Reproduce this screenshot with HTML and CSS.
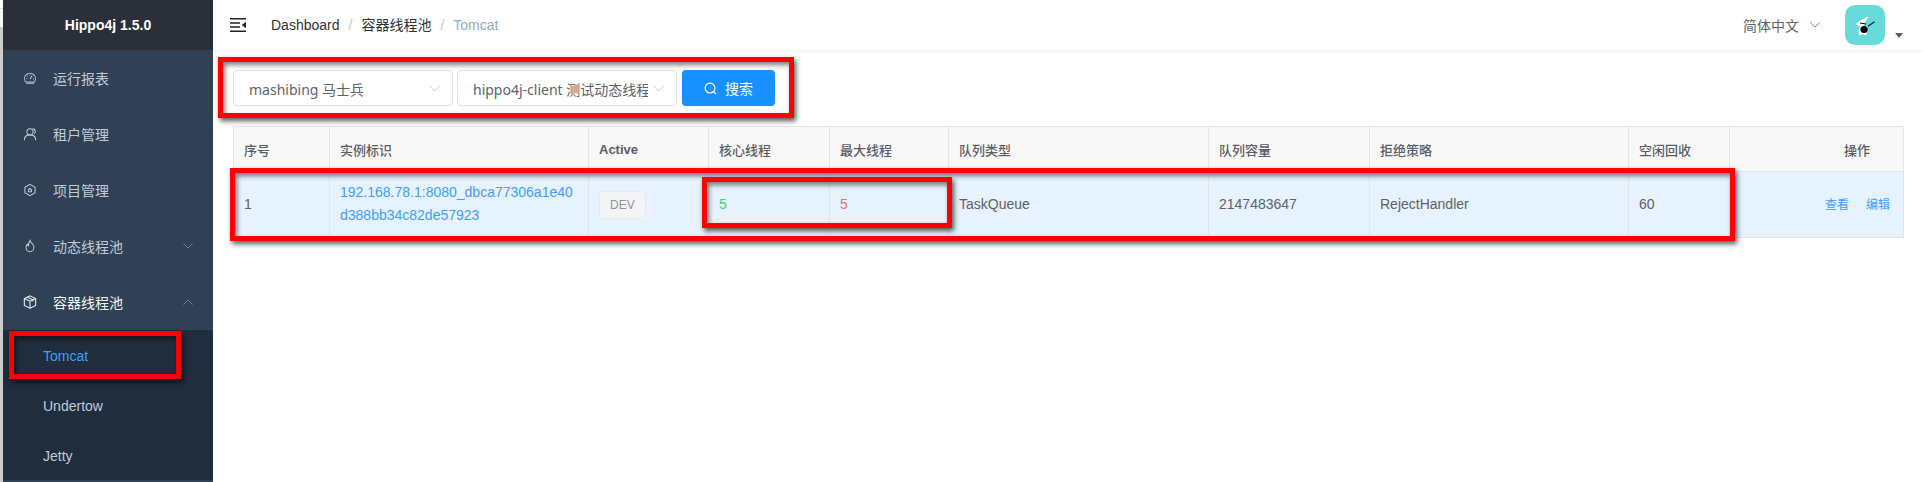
FILE: index.html
```html
<!DOCTYPE html>
<html lang="zh-CN">
<head>
<meta charset="utf-8">
<title>Hippo4j</title>
<link rel="stylesheet" href="styles.css">
</head>
<body>
<div class="app">
  <div class="strip"><div class="strip-top"></div><div class="strip-mid"></div><div class="strip-rest"></div></div>
  <aside class="sidebar">
    <div class="logo">Hippo4j 1.5.0</div>
    <nav class="menu">
      <a class="item">
        <svg class="ico" viewBox="0 0 16 16"><path d="M3 12.600A6.300 6.300 0 1 1 13 12.600Z"/><path d="M8 9.500 10.500 5.500M4 8.500h1M11.500 9h1M8 4v1M5 5.500l.7.7"/><path d="M3.500 14h9"/></svg>
        <span>运行报表</span>
      </a>
      <a class="item">
        <svg class="ico" viewBox="0 0 16 16"><circle cx="8" cy="5.500" r="3.600"/><path d="M1.500 15c0-3.600 2.600-6 6.500-6s6.500 2.400 6.500 6"/><path d="M11 1.800c2 .3 3 1.500 3 3.200 0 1-.5 2-1.300 2.500"/></svg>
        <span>租户管理</span>
      </a>
      <a class="item">
        <svg class="ico" viewBox="0 0 16 16"><path d="M8 1.500 13.800 4.800v6.400L8 14.500 2.200 11.200V4.800Z"/><path d="M6.300 10V7.800L8 6.300l1.700 1.500V10Z"/></svg>
        <span>项目管理</span>
      </a>
      <a class="item">
        <svg class="ico" viewBox="0 0 16 16"><path d="M8.200 1.500c.3 2.200 1.600 3 2.800 4.300 1 1.100 1.500 2.200 1.500 3.500 0 3-2.100 5.200-4.600 5.200S3.500 12.300 3.500 9.500c0-1.500.6-2.700 1.500-3.700.2 1 .6 1.600 1.300 2C6.200 5.500 6.800 3.200 8.200 1.500Z"/></svg>
        <span>动态线程池</span>
        <svg class="chev" viewBox="0 0 10 6"><path d="M.5.500 5 5 9.500.5"/></svg>
      </a>
      <a class="item item-open">
        <svg class="ico" viewBox="0 0 16 16"><path d="M8 1 14.500 4v8L8 15 1.500 12V4Z"/><path d="M1.500 4 8 7l6.500-3M8 7v8M5 2.500 11.500 5.500v2"/></svg>
        <span>容器线程池</span>
        <svg class="chev" viewBox="0 0 10 6"><path d="M.5 5.500 5 1l4.500 4.500"/></svg>
      </a>
      <div class="sub">
        <a class="sub-item sub-active">Tomcat</a>
        <a class="sub-item">Undertow</a>
        <a class="sub-item">Jetty</a>
      </div>
    </nav>
  </aside>
  <main class="main">
    <header class="navbar">
      <svg class="hamburger" viewBox="0 0 16 14"><path d="M0 0h16v1.600H0zM0 12.400h16V14H0zM0 4.200h10v1.500H0zM0 8.300h10v1.500H0zM16 3.800v6.400L11.800 7Z"/></svg>
      <div class="crumbs">
        <span class="crumb">Dashboard</span><span class="sep">/</span>
        <span class="crumb">容器线程池</span><span class="sep">/</span>
        <span class="crumb crumb-last">Tomcat</span>
      </div>
      <div class="nav-right">
        <span class="lang">简体中文</span>
        <svg class="lang-chev" viewBox="0 0 12 7"><path d="M.5.500 6 6l5.500-5.500"/></svg>
        <div class="avatar">
          <svg viewBox="0 0 40 40"><path d="M23.500 11.500 15 15.500 10.500 19.500 15 21 13.500 25 14 30.500 18 29 21 30.500 22 27 17 23 19 20Z" fill="#fff"/><circle cx="19" cy="24.500" r="3.600" fill="#000"/><path d="M23 21.200 29.500 16.700" stroke="#222" stroke-width="1.300"/><path d="M15 18 21 19" stroke="#000"/></svg>
        </div>
        <span class="caret"></span>
      </div>
    </header>
    <section class="content">
      <div class="filters">
        <div class="select"><span class="select-text">mashibing 马士兵</span><svg class="select-chev" viewBox="0 0 12 7"><path d="M.5.500 6 6l5.500-5.500"/></svg></div>
        <div class="select"><span class="select-text">hippo4j-client 测试动态线程池</span><svg class="select-chev" viewBox="0 0 12 7"><path d="M.5.500 6 6l5.500-5.500"/></svg></div>
        <button class="search" type="button">
          <svg class="search-ico" viewBox="0 0 14 14"><circle cx="6.500" cy="6.500" r="5.300"/><path d="M10.500 10.500 13 13"/></svg>
          <span>搜索</span>
        </button>
      </div>
      <table class="grid">
        <colgroup>
          <col class="c-no"><col class="c-id"><col class="c-act"><col class="c-core"><col class="c-max"><col class="c-type"><col class="c-cap"><col class="c-rej"><col class="c-idle"><col class="c-op">
        </colgroup>
        <thead>
          <tr><th>序号</th><th>实例标识</th><th class="th-latin">Active</th><th>核心线程</th><th>最大线程</th><th>队列类型</th><th>队列容量</th><th>拒绝策略</th><th>空闲回收</th><th class="th-op">操作</th></tr>
        </thead>
        <tbody>
          <tr>
            <td>1</td>
            <td><a class="link">192.168.78.1:8080_dbca77306a1e40d388bb34c82de57923</a></td>
            <td><span class="tag">DEV</span></td>
            <td class="green">5</td>
            <td class="red">5</td>
            <td>TaskQueue</td>
            <td>2147483647</td>
            <td>RejectHandler</td>
            <td>60</td>
            <td class="td-op"><a class="op">查看</a><a class="op">编辑</a></td>
          </tr>
        </tbody>
      </table>
    </section>
  </main>
</div>
<div class="mark mark-filter"></div>
<div class="mark mark-row"></div>
<div class="mark mark-cells"></div>
<div class="mark mark-menu"></div>
</body>
</html>
```

FILE: styles.css
```css
* { box-sizing: border-box; }
html, body { margin: 0; height: 100%; }
body {
  position: relative;
  width: 1923px;
  height: 482px;
  overflow: hidden;
  background: #fff;
  font-family: "Liberation Sans", "Noto Sans CJK SC", sans-serif;
  font-size: 14px;
}
.app { display: flex; height: 482px; }

.strip { width: 3px; flex: none; display: flex; flex-direction: column; }
.strip-top { height: 9px; background: #fff; border-bottom: 1px solid #ddd; }
.strip-mid { height: 18px; background: #f6f6f6; }
.strip-rest { flex: 1; background: #ccc; }

.sidebar { width: 210px; flex: none; background: #304156; display: flex; flex-direction: column; }
.logo {
  height: 50px; flex: none; background: #2b2f3a; color: #fff;
  font-size: 14px; font-weight: 700; line-height: 50px; text-align: center;
}
.menu { display: flex; flex-direction: column; flex: 1; }
.item {
  height: 56px; flex: none; display: flex; align-items: center;
  padding-left: 20px; padding-right: 20px; color: #bfcbd9; font-size: 14px;
}
.item-open { color: #f4f4f5; }
.ico { width: 14px; height: 14px; margin-right: 16px; flex: none; fill: none; stroke: currentColor; stroke-width: 1.150; }
.chev { width: 10px; height: 6px; margin-left: auto; fill: none; stroke: #6d7a8a; stroke-width: 1; }
.sub { background: #1f2d3d; height: 150px; flex: none; }
.sub-item { display: block; height: 50px; line-height: 52px; padding-left: 40px; color: #bfcbd9; font-size: 14px; }
.sub-active { color: #409eff; }

.main { flex: 1; min-width: 0; display: flex; flex-direction: column; }
.navbar {
  height: 50px; flex: none; display: flex; align-items: center;
  padding-left: 17px; box-shadow: 0 1px 4px rgba(0, 21, 41, .08); background: #fff;
}
.hamburger { width: 16px; height: 14px; flex: none; fill: #222; }
.crumbs { display: flex; align-items: baseline; margin-left: 25px; color: #303133; font-size: 14px; line-height: 20px; white-space: nowrap; }
.sep { margin: 0 9px; color: #c0c4cc; }
.crumb-last { color: #97a8be; }
.nav-right { margin-left: auto; display: flex; align-items: center; height: 50px; padding-right: 20px; }
.lang { color: #606266; font-size: 14px; }
.lang-chev { width: 10px; height: 6px; margin-left: 11px; margin-right: 25px; fill: none; stroke: #606266; stroke-width: 1; }
.avatar { width: 40px; height: 40px; border-radius: 10px; background: #66dbd9; overflow: hidden; }
.avatar svg { display: block; width: 40px; height: 40px; }
.caret {
  width: 0; height: 0; margin-left: 10px; margin-top: 20px;
  border-left: 4px solid transparent; border-right: 4px solid transparent; border-top: 5px solid #5a5e66;
}

.content { padding: 20px 20px 0; }
.filters { display: flex; height: 36px; margin-bottom: 20px; }
.select {
  width: 220px; height: 36px; margin-right: 4px; display: flex; align-items: center;
  border: 1px solid #dcdfe6; border-radius: 4px; padding-left: 15px; padding-right: 12px; color: #606266;
  font-family: "Noto Sans", "Noto Sans CJK SC", sans-serif;
}
.select-text { width: 175px; margin-top: 2px; overflow: hidden; white-space: nowrap; flex: none; }
.select-chev { width: 11px; height: 7px; margin-left: auto; fill: none; stroke: #c0c4cc; stroke-width: 1; }
.search {
  width: 93px; height: 36px; margin-left: 1px; border: 0; border-radius: 4px; background: #1890ff; color: #fff;
  display: flex; align-items: center; justify-content: center; font: inherit;
}
.search-ico { width: 13px; height: 13px; margin-right: 8px; fill: none; stroke: #fff; stroke-width: 1.200; }

.grid { width: 1670px; table-layout: fixed; border-collapse: collapse; font-size: 14px; color: #606266; }
.c-no { width: 96px; } .c-id { width: 259px; } .c-act { width: 120px; } .c-core { width: 121px; }
.c-max { width: 119px; } .c-type { width: 260px; } .c-cap { width: 161px; } .c-rej { width: 259px; }
.c-idle { width: 101px; } .c-op { width: 174px; }
.grid th, .grid td { border: 1px solid #dfe6ec; padding: 0 10px; text-align: left; }
.grid th { height: 45px; background: #f8f8f8; color: #5a5e66; font-size: 13px; font-weight: 500; }
.grid .th-latin { font-weight: 700; }
.grid td { height: 66px; background: #e6f2fd; line-height: 23px; }
.grid .th-op { text-align: right; padding-right: 33px; }
.grid .td-op { text-align: right; padding-right: 13px; }
.link { display: block; margin-bottom: 2px; color: #409eff; word-break: break-all; }
.tag {
  display: inline-block; height: 28px; line-height: 26px; padding: 0 10px; border: 1px solid #e9e9eb;
  border-radius: 4px; background: #f4f4f5; color: #909399; font-size: 12px;
}
.green { color: #30d97a; }
.red { color: #f56c6c; }
.op { color: #409eff; font-size: 12px; margin-left: 17px; }

.mark {
  position: absolute; border: 5px solid #f00;
  box-shadow: 2px 3px 5px rgba(0, 0, 0, .65), inset 2px 3px 5px rgba(0, 0, 0, .5);
}
.mark-filter { left: 218px; top: 57px; width: 576px; height: 61px; }
.mark-row { left: 230px; top: 168px; width: 1505px; height: 73px; }
.mark-cells { left: 702px; top: 177px; width: 250px; height: 51px; }
.mark-menu { left: 9px; top: 331px; width: 172px; height: 48px; }
```
